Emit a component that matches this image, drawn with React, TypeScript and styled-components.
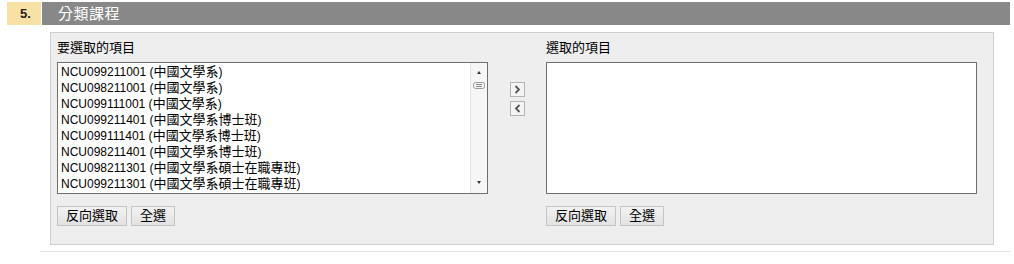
import React from 'react';
import styled, { createGlobalStyle } from 'styled-components';

const GlobalStyle = createGlobalStyle`
  html, body {
    margin: 0;
    padding: 0;
    background: #fff;
    font-family: 'Liberation Sans', Arial, 'Noto Sans CJK TC', sans-serif;
    color: #000;
  }
`;

const courses = [
  { code: 'NCU099211001', dept: '中國文學系' },
  { code: 'NCU098211001', dept: '中國文學系' },
  { code: 'NCU099111001', dept: '中國文學系' },
  { code: 'NCU099211401', dept: '中國文學系博士班' },
  { code: 'NCU099111401', dept: '中國文學系博士班' },
  { code: 'NCU098211401', dept: '中國文學系博士班' },
  { code: 'NCU098211301', dept: '中國文學系碩士在職專班' },
  { code: 'NCU099211301', dept: '中國文學系碩士在職專班' },
];

type Course = { code: string; dept: string };

const ScrollBar = () => (
  <Track>
    <svg width="16" height="130" viewBox="0 0 16 130">
      <path d="M6 11 L10 11 L8 8 Z" fill="#333" />
      <rect x="2.5" y="19.5" width="11" height="6" rx="2" fill="#f4f4f4" stroke="#9a9a9a" />
      <line x1="5" y1="21.5" x2="11" y2="21.5" stroke="#8a8a8a" />
      <line x1="5" y1="23.5" x2="11" y2="23.5" stroke="#8a8a8a" />
      <path d="M6 118 L10 118 L8 121 Z" fill="#333" />
    </svg>
  </Track>
);

const ListColumn = ({ title, items }: { title: string; items: Course[] }) => (
  <Column>
    <Label>{title}</Label>
    <ListBox>
      <Items>
        {items.map((item) => (
          <Item key={item.code}>
            {item.code} (<Dept>{item.dept}</Dept>)
          </Item>
        ))}
      </Items>
      {items.length > 0 && <ScrollBar />}
    </ListBox>
    <ButtonRow>
      <Button>反向選取</Button>
      <Button>全選</Button>
    </ButtonRow>
  </Column>
);

const App = () => (
  <>
    <GlobalStyle />
    <Page>
      <Header>
        <StepNumber>5.</StepNumber>
        <HeaderTitle>分類課程</HeaderTitle>
      </Header>
      <Panel>
        <ListColumn title="要選取的項目" items={courses} />
        <MoveButtons>
          <ArrowButton>
            <svg width="7" height="9" viewBox="0 0 7 9">
              <path d="M1.5 1 L5 4.5 L1.5 8" fill="none" stroke="#555" strokeWidth="1.8" />
            </svg>
          </ArrowButton>
          <ArrowButton>
            <svg width="7" height="9" viewBox="0 0 7 9">
              <path d="M5.5 1 L2 4.5 L5.5 8" fill="none" stroke="#555" strokeWidth="1.8" />
            </svg>
          </ArrowButton>
        </MoveButtons>
        <ListColumn title="選取的項目" items={[]} />
      </Panel>
      <Divider />
    </Page>
  </>
);

const Page = styled.div`
  width: 1003px;
  padding: 2px 0 0 7px;
`;

const Header = styled.div`
  display: flex;
  gap: 1px;
  height: 23px;
`;

const StepNumber = styled.div`
  width: 34px;
  background: #f8e1a4;
  color: #222;
  font-size: 13px;
  font-weight: bold;
  line-height: 23px;
  padding-left: 13px;
  box-sizing: border-box;
`;

const HeaderTitle = styled.div`
  flex: 1;
  background: #888888;
  color: #fff;
  font-size: 15px;
  letter-spacing: 0.5px;
  line-height: 23px;
  padding-left: 16px;
`;

const Panel = styled.div`
  display: grid;
  grid-template-columns: 431px 58px 431px;
  margin: 7px 0 0 43px;
  width: 944px;
  height: 213px;
  box-sizing: border-box;
  padding: 7px 0 0 6px;
  background: #eeeeee;
  border: 1px solid #cfcfcf;
`;

const Column = styled.div`
  display: flex;
  flex-direction: column;
`;

const Label = styled.div`
  font-size: 13px;
  line-height: 16px;
  height: 16px;
  margin-bottom: 6px;
`;

const ListBox = styled.div`
  display: flex;
  height: 132px;
  box-sizing: border-box;
  border: 1px solid #6e6e6e;
  background: #fff;
  overflow: hidden;
`;

const Items = styled.div`
  flex: 1;
  padding: 1px 0 0 3px;
`;

const Item = styled.div`
  font-size: 12px;
  line-height: 16px;
  white-space: nowrap;
`;

const Dept = styled.span`
  font-size: 13px;
`;

const Track = styled.div`
  width: 16px;
  border-left: 1px solid #e2e2e2;
  background: #f6f6f6;
`;

const ButtonRow = styled.div`
  display: flex;
  gap: 4px;
  margin-top: 12px;
`;

const Button = styled.button`
  height: 20px;
  padding: 0 8px;
  font-family: 'Liberation Sans', Arial, 'Noto Sans CJK TC', sans-serif;
  font-size: 13px;
  line-height: 18px;
  color: #000;
  background: linear-gradient(#f2f2f2, #e2e2e2);
  border: 1px solid #c4c4c4;
  border-radius: 0;
`;

const MoveButtons = styled.div`
  display: flex;
  flex-direction: column;
  align-items: center;
  gap: 4px;
  padding-top: 42px;
`;

const ArrowButton = styled.div`
  display: flex;
  align-items: center;
  justify-content: center;
  width: 15px;
  height: 15px;
  box-sizing: border-box;
  border: 1px solid #b4b4b4;
  background: #f4f4f4;
`;

const Divider = styled.div`
  margin: 6px 0 0 33px;
  width: 970px;
  height: 1px;
  background: #e4e4e4;
`;

export default App;
